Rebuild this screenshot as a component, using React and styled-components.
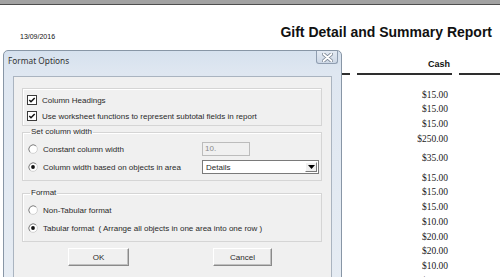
import React from "react";
import styled, { createGlobalStyle } from "styled-components";

const GlobalStyle = createGlobalStyle`
  html, body {
    margin: 0;
    padding: 0;
    background: #fff;
    overflow: hidden;
  }
  #root {
    width: 500px;
    height: 277px;
  }
`;

const amounts = [
  { v: "$15.00", space: 0 },
  { v: "$15.00", space: 2 },
  { v: "$15.00", space: 3 },
  { v: "$250.00", space: 3 },
  { v: "$35.00", space: 7 },
  { v: "$15.00", space: 8 },
  { v: "$15.00", space: 2 },
  { v: "$15.00", space: 3 },
  { v: "$10.00", space: 3 },
  { v: "$20.00", space: 3 },
  { v: "$20.00", space: 2 },
  { v: "$10.00", space: 3 },
  { v: "$15.00", space: 3 },
];

const CheckBox = ({ checked }) => (
  <svg width="10" height="10" viewBox="0 0 10 10">
    <rect x="0.5" y="0.5" width="9" height="9" fill="#fff" stroke="#3a3a3a" />
    {checked && (
      <path d="M2.3 4.9 L4 6.7 L7.7 2.9" stroke="#111" strokeWidth="1.5" fill="none" />
    )}
  </svg>
);

const Radio = ({ checked }) => (
  <svg width="10" height="10" viewBox="0 0 10 10">
    <circle cx="5" cy="5" r="4.4" fill="#fff" stroke="#d2d2d2" />
    <path d="M1.9 8.1 A4.4 4.4 0 0 1 8.1 1.9" stroke="#8a8a8a" fill="none" />
    {checked && <circle cx="5" cy="5" r="1.9" fill="#111" />}
  </svg>
);

export default function App() {
  return (
    <Page>
      <GlobalStyle />
      <TopBar />

      {/* ENCABEZADO DEL REPORTE */}
      <ReportHead>
        <DateText>13/09/2016</DateText>
        <ReportTitle>Gift Detail and Summary Report</ReportTitle>
      </ReportHead>

      <ColumnHeads>
        <HeadCell width="100px" />
        <HeadCell width="95px">Cash</HeadCell>
        <HeadCell grow />
      </ColumnHeads>

      <Amounts>
        {amounts.map((a, i) => (
          <Amount key={i} space={a.space}>
            {a.v}
          </Amount>
        ))}
      </Amounts>

      {/* DIALOGO */}
      <Dialog>
        <TitleBar>
          <TitleText>Format Options</TitleText>
          <CloseButton>
            <svg width="11" height="9" viewBox="0 0 11 9">
              <path d="M1.5 1 L9.5 8 M9.5 1 L1.5 8" stroke="#7c8796" strokeWidth="3.6" strokeLinecap="round" />
              <path d="M1.5 1 L9.5 8 M9.5 1 L1.5 8" stroke="#fff" strokeWidth="1.8" strokeLinecap="round" />
            </svg>
          </CloseButton>
        </TitleBar>

        <Client>
          <Group first>
            <OptionRow>
              <CheckBox checked />
              <span>Column Headings</span>
            </OptionRow>
            <OptionRow>
              <CheckBox checked />
              <span>Use worksheet functions to represent subtotal fields in report</span>
            </OptionRow>
          </Group>

          <Group>
            <Legend>Set column width</Legend>
            <OptionRow radio>
              <Radio />
              <Label>Constant column width</Label>
              <TextBox>10.</TextBox>
            </OptionRow>
            <OptionRow radio>
              <Radio checked />
              <Label>Column width based on objects in area</Label>
              <Combo>
                <span>Details</span>
                <ComboArrow>
                  <svg width="7" height="4" viewBox="0 0 7 4">
                    <path d="M0 0 L7 0 L3.5 4 Z" fill="#000" />
                  </svg>
                </ComboArrow>
              </Combo>
            </OptionRow>
          </Group>

          <Group spaced>
            <Legend>Format</Legend>
            <OptionRow radio>
              <Radio />
              <span>Non-Tabular format</span>
            </OptionRow>
            <OptionRow radio>
              <Radio checked />
              <span>Tabular format&nbsp; ( Arrange all objects in one area into one row )</span>
            </OptionRow>
          </Group>

          <Buttons>
            <Button width="61px">OK</Button>
            <Button width="59px">Cancel</Button>
          </Buttons>
        </Client>
      </Dialog>
    </Page>
  );
}

/* ---------- ESTILOS ---------- */
const Page = styled.div`
  position: relative;
  width: 500px;
  height: 277px;
  overflow: hidden;
  background: #fff;
  font-family: "Liberation Sans", Arial, sans-serif;
`;

const TopBar = styled.div`
  height: 4px;
  background: #a2a2a2;
  border-bottom: 1px solid #4e4e4e;
`;

/* REPORTE */
const ReportHead = styled.div`
  display: flex;
  justify-content: space-between;
  align-items: flex-end;
  padding: 0 8px 0 20px;
  margin-top: 19px;
`;

const DateText = styled.div`
  font-size: 7px;
  line-height: 9px;
  color: #111;
  margin-bottom: 4px;
`;

const ReportTitle = styled.div`
  font-size: 14px;
  font-weight: bold;
  line-height: 16px;
  color: #111;
  margin-bottom: 5px;
`;

const ColumnHeads = styled.div`
  display: flex;
  gap: 7px;
  padding-left: 250px;
  margin-top: 14px;
`;

const HeadCell = styled.div`
  width: ${(p) => p.width || "auto"};
  flex: ${(p) => (p.grow ? 1 : "none")};
  height: 16px;
  border-bottom: 2px solid #2e2e2e;
  padding-right: 2px;
  box-sizing: border-box;
  text-align: right;
  font-size: 9px;
  font-weight: bold;
  line-height: 10px;
  color: #111;
`;

const Amounts = styled.div`
  display: flex;
  flex-direction: column;
  width: 91px;
  margin-left: 357px;
  margin-top: 14px;
`;

const Amount = styled.div`
  font-family: "Liberation Serif", "Times New Roman", serif;
  font-size: 9.5px;
  line-height: 12px;
  text-align: right;
  color: #1a1a1a;
  margin-top: ${(p) => p.space}px;
`;

/* DIALOGO */
const Dialog = styled.div`
  position: absolute;
  left: 3px;
  top: 50px;
  width: 339px;
  height: 240px;
  box-sizing: border-box;
  border: 1px solid #8896a6;
  border-radius: 5px 5px 0 0;
  background: linear-gradient(#d6e1ee, #dfe7f1 22px, #e6ecf3);
  display: flex;
  flex-direction: column;
`;

const TitleBar = styled.div`
  display: flex;
  justify-content: space-between;
  align-items: flex-start;
  height: 25px;
  padding-left: 4px;
  padding-right: 3px;
`;

const TitleText = styled.div`
  font-family: "Noto Sans", "Open Sans", sans-serif;
  font-size: 8.3px;
  line-height: 12px;
  color: #333;
  margin-top: 4px;
`;

const CloseButton = styled.div`
  width: 22px;
  height: 13px;
  box-sizing: border-box;
  border: 1px solid #8f9db0;
  border-top: none;
  border-radius: 0 0 3px 3px;
  background: linear-gradient(#e3eaf3, #cdd8e6);
  display: flex;
  align-items: center;
  justify-content: center;
`;

const Client = styled.div`
  margin: 0 9px;
  flex: 1;
  background: #f0f0f0;
  border: 1px solid #aab4c0;
  padding: 11px 9px 7px 8px;
  display: flex;
  flex-direction: column;
  font-size: 8px;
  color: #2a2a2a;
`;

const Group = styled.fieldset`
  margin: ${(p) => (p.first ? "0" : p.spaced ? "7px 0 0" : "1px 0 0")};
  padding: ${(p) => (p.first ? "5px 0 3px 4px" : "5px 0 6px 5px")};
  border: 1px solid #d5d5d5;
  box-shadow: inset 1px 1px 0 #fff;
  display: flex;
  flex-direction: column;
  gap: 4px;
  min-width: 0;
`;

const Legend = styled.legend`
  padding: 0 1px;
  margin-left: 2px;
  font-size: 8px;
  line-height: 10px;
  color: #2a2a2a;
`;

const OptionRow = styled.div`
  display: flex;
  align-items: center;
  gap: 5px;
  height: ${(p) => (p.radio ? "14px" : "12px")};
  white-space: nowrap;
`;

const Label = styled.span`
  width: 154px;
`;

const TextBox = styled.div`
  width: 48px;
  height: 14px;
  box-sizing: border-box;
  border: 1px solid #bcbcbc;
  background: #f0f0f0;
  color: #8a8a8a;
  padding-left: 2px;
  line-height: 12px;
`;

const Combo = styled.div`
  width: 117px;
  height: 14px;
  box-sizing: border-box;
  border: 1px solid #7a7a7a;
  background: #fff;
  display: flex;
  align-items: center;
  justify-content: space-between;
  padding-left: 3px;
  padding-right: 1px;
`;

const ComboArrow = styled.div`
  width: 12px;
  height: 10px;
  box-sizing: border-box;
  background: #f0f0f0;
  border: 1px solid;
  border-color: #fff #7a7a7a #7a7a7a #fff;
  display: flex;
  align-items: center;
  justify-content: center;
`;

const Buttons = styled.div`
  display: flex;
  gap: 84px;
  padding-left: 46px;
  margin-top: 6px;
`;

const Button = styled.div`
  width: ${(p) => p.width};
  height: 18px;
  box-sizing: border-box;
  border: 1px solid;
  border-color: #fff #8a8a8a #8a8a8a #fff;
  box-shadow: inset -1px -1px 0 #c0c0c0;
  background: #f0f0f0;
  display: flex;
  align-items: center;
  justify-content: center;
  font-size: 8px;
  color: #2a2a2a;
`;
